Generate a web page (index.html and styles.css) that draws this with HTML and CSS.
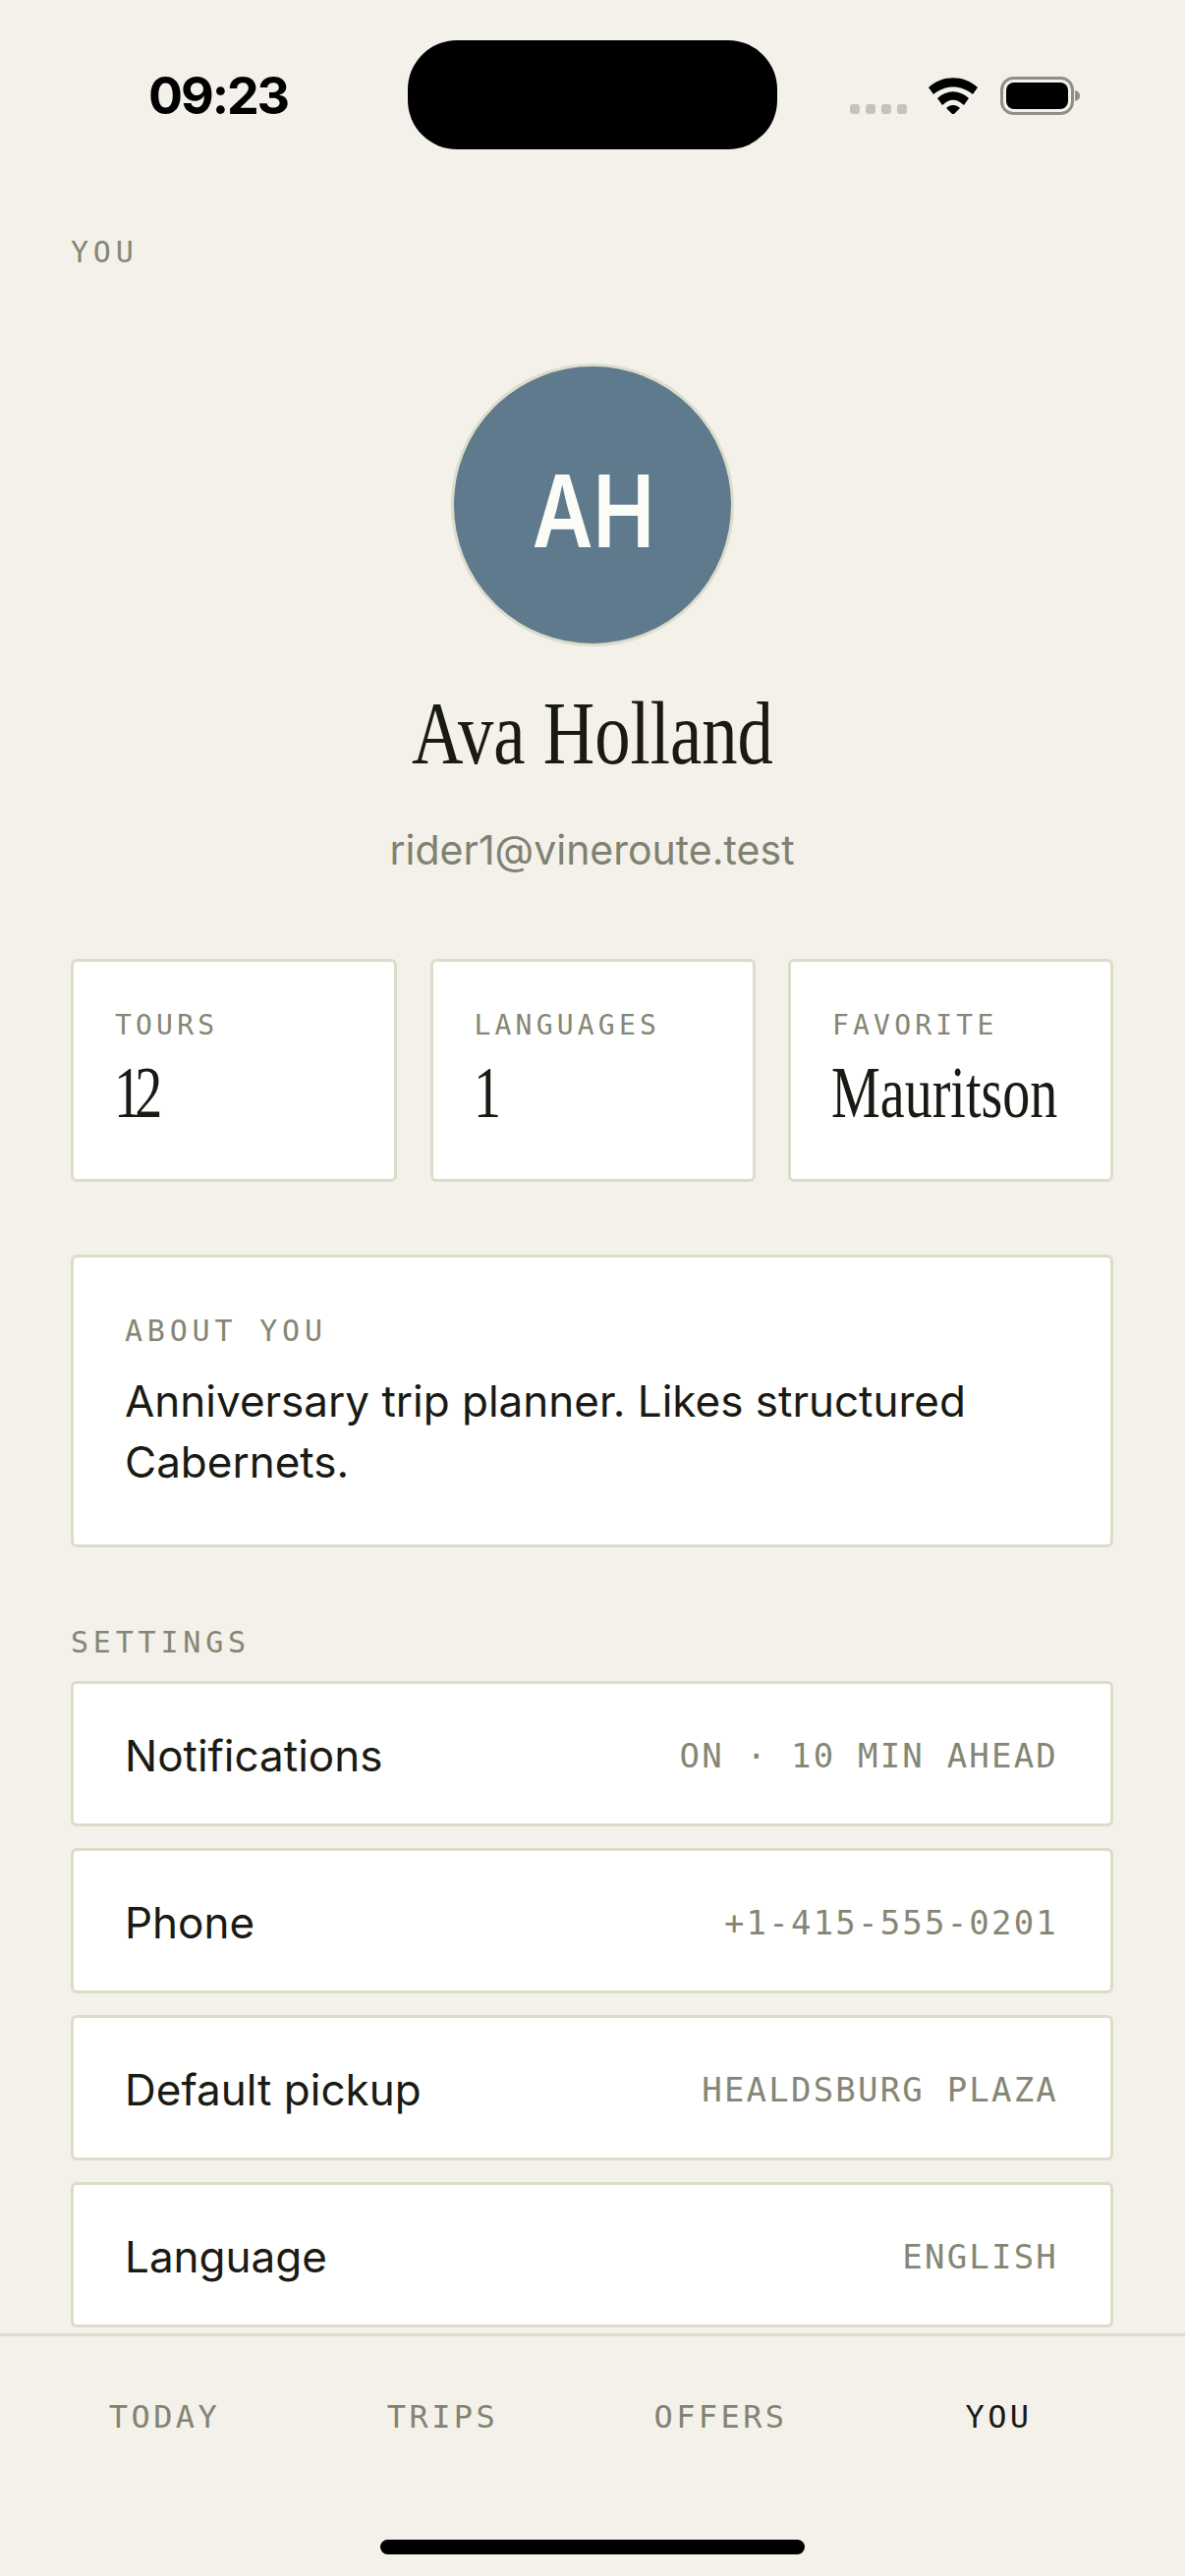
FILE: index.html
```html
<!DOCTYPE html>
<html lang="en">
<head>
<meta charset="utf-8">
<title>You</title>
<link rel="stylesheet" href="styles.css">
</head>
<body>
<div class="screen">
  <header class="status">
    <span class="time">09:23</span>
    <div class="island"></div>
    <div class="status-icons">
      <div class="dots"><i></i><i></i><i></i><i></i></div>
      <svg class="wifi" width="50" height="37" viewBox="0 0 50 37"><path d="M0 10C14-3 36-3 50 10L45 17C33 7 17 7 5 17Z"/><path d="M9 21C19 12 31 12 41 21L36 28C28 21 22 21 14 28Z"/><path d="M18 31C22 27 28 27 32 31L25 38Z"/></svg>
      <svg class="battery" width="82" height="39" viewBox="0 0 82 39"><rect x="1.5" y="1.5" width="72" height="36" rx="12" fill="none" stroke="#8f8f88" stroke-width="3"/><rect x="6" y="6" width="63" height="27" rx="8"/><path d="M76 14C80 15 81 17 81 19.5C81 22 80 24 76 25Z" fill="#8f8f88"/></svg>
    </div>
  </header>
  <main class="content">
    <div class="label page-label">YOU</div>
    <section class="profile">
      <div class="avatar"><span class="initials">AH</span></div>
      <h1 class="name"><span class="narrow">Ava Holland</span></h1>
      <div class="email">rider1@vineroute.test</div>
    </section>
    <section class="stats">
      <div class="card stat"><div class="label label-small">TOURS</div><div class="value digits"><span class="narrow">12</span></div></div>
      <div class="card stat"><div class="label label-small">LANGUAGES</div><div class="value digits"><span class="narrow">1</span></div></div>
      <div class="card stat"><div class="label label-small">FAVORITE</div><div class="value"><span class="narrow">Mauritson</span></div></div>
    </section>
    <section class="card about">
      <div class="label">ABOUT YOU</div>
      <p class="about-text">Anniversary trip planner. Likes structured Cabernets.</p>
    </section>
    <div class="label settings-label">SETTINGS</div>
    <section class="settings">
      <div class="card row"><span class="row-name">Notifications</span><span class="row-value">ON · 10 MIN AHEAD</span></div>
      <div class="card row"><span class="row-name">Phone</span><span class="row-value">+1-415-555-0201</span></div>
      <div class="card row"><span class="row-name">Default pickup</span><span class="row-value">HEALDSBURG PLAZA</span></div>
      <div class="card row"><span class="row-name">Language</span><span class="row-value">ENGLISH</span></div>
    </section>
  </main>
  <nav class="tabs">
    <span class="tab">TODAY</span>
    <span class="tab">TRIPS</span>
    <span class="tab">OFFERS</span>
    <span class="tab active">YOU</span>
  </nav>
  <div class="home-zone"><div class="home-bar"></div></div>
</div>
</body>
</html>
```
FILE: styles.css
```css
* { box-sizing: border-box; }
html, body { margin: 0; padding: 0; }
body { background: #f3f1ea; color: #1a1a14; font-family: "Inter", sans-serif; }
.screen { width: 1206px; height: 2622px; display: flex; flex-direction: column; overflow: hidden; }

.status { height: 152px; flex: none; display: flex; align-items: flex-start; padding: 41px 113px 0 151px; justify-content: space-between; }
.time { font: 700 52px/1 "Inter", sans-serif; letter-spacing: -2.1px; color: #000; margin-top: 31px; width: 264px; flex: none; }
.island { width: 376px; height: 111px; background: #000; border-radius: 50px; flex: none; }
.status-icons { display: flex; align-items: flex-start; padding-top: 37px; margin-left: 74px; flex: none; }
.dots { display: flex; gap: 6px; margin-top: 28px; }
.dots i { width: 10px; height: 10px; background: #c4c4be; border-radius: 3px; }
.wifi { margin-left: 22px; margin-top: 1px; }
.battery { margin-left: 23px; }

.content { flex: 1; min-height: 0; overflow: hidden; padding: 0 73px 0 72px; }
.label { font: 400 30px/36px "DejaVu Sans Mono", monospace; letter-spacing: 4.8px; color: #858674; }
.label-small { font-size: 28px; letter-spacing: 4.2px; }
.page-label { margin-top: 87px; }

.profile { display: flex; flex-direction: column; align-items: center; margin-top: 95px; }
.avatar { width: 288px; height: 288px; border-radius: 50%; background: #5f7a8c; border: 3px solid #dcdccb; display: flex; align-items: center; justify-content: center; padding-top: 12px; }
.initials { display: inline-block; font: 600 102px/1 "Inter", sans-serif; color: #fbfbf8; transform: scaleX(.83); margin-left: 4px; }
.name { font: 400 92px/97px "Liberation Serif", serif; margin: 40px 0 0; color: #1a1a14; white-space: nowrap; }
.narrow { display: inline-block; transform: scaleX(.757); transform-origin: left center; }
.name .narrow { transform: scaleX(.79); transform-origin: center; }
.email { font: 400 41px/1.2 "Inter", sans-serif; color: #808170; margin-top: 46px; }

.card { background: #fff; border: 3px solid #dcdccb; border-radius: 6px; }
.stats { display: grid; grid-template-columns: 332px 331px 331px; column-gap: 33.5px; margin-top: 86px; }
.stat { height: 227px; padding: 47px 0 0 42px; }
.value { font: 400 74px/84px "Liberation Serif", serif; color: #1a1a14; margin: 8px 0 0 -1px; white-space: nowrap; }
.digits { letter-spacing: -9px; }

.about { margin-top: 74px; height: 298px; padding: 57px 52px 0; }
.about-text { font: 400 44px/62px "Inter", sans-serif; margin: 22px 0 0; color: #1a1a14; }

.settings-label { margin-top: 79px; }
.settings { display: flex; flex-direction: column; gap: 22px; margin-top: 21px; }
.row { height: 148px; flex: none; display: flex; align-items: center; justify-content: space-between; padding: 4px 53px 0 52px; }
.row-name { font: 400 44px/1.2 "Inter", sans-serif; color: #1a1a14; }
.row-value { font: 400 34px/1.2 "DejaVu Sans Mono", monospace; letter-spacing: 2.2px; color: #858674; }

.tabs { flex: none; height: 174px; border-top: 3px solid #dcdccb; display: grid; grid-template-columns: repeat(4, 283px); padding: 0 35px 7px 26px; align-items: center; }
.tab { text-align: center; font: 500 32px/1 "DejaVu Sans Mono", monospace; letter-spacing: 3.4px; color: #83846f; }
.tab.active { color: #1a1a14; }
.home-zone { flex: none; height: 73px; display: flex; justify-content: center; }
.home-bar { width: 432px; height: 15px; margin-top: 36px; background: #000; border-radius: 8px; }
```
